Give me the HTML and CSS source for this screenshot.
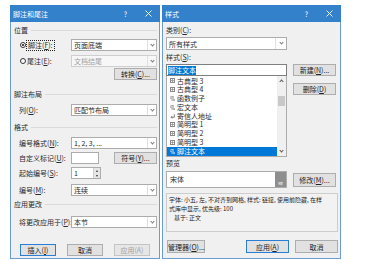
FILE: index.html
```html
<!DOCTYPE html>
<html>
<head>
<meta charset="utf-8">
<title>脚注和尾注 / 样式</title>
<link rel="stylesheet" href="styles.css">
</head>
<body>
<div class="desk">

  <!-- 脚注和尾注 -->
  <div class="dialog footnote">
    <div class="titlebar">
      <span class="title">脚注和尾注</span>
      <span class="tb-btn">?</span>
      <span class="tb-btn"><svg width="7" height="7" viewBox="0 0 7 7"><path d="M0.5 0.5L6.5 6.5M6.5 0.5L0.5 6.5" stroke="#fff" stroke-width="0.9"/></svg></span>
    </div>
    <div class="body">
      <div class="group mt3">位置</div>
      <div class="row mt4">
        <div class="lbl radio"><span class="dot on"></span><span class="focus">脚注(<u>F</u>):</span></div>
        <div class="combo"><span class="text">页面底端</span><i class="arrow"></i></div>
      </div>
      <div class="row mt4">
        <div class="lbl radio"><span class="dot"></span><span>尾注(<u>E</u>):</span></div>
        <div class="combo off"><span class="text">文档结尾</span><i class="arrow"></i></div>
      </div>
      <div class="row mt1">
        <button class="btn side-btn push">转换(<u>C</u>)...</button>
      </div>

      <div class="group mt9">脚注布局</div>
      <div class="row mt5">
        <div class="lbl">列(<u>O</u>):</div>
        <div class="combo"><span class="text">匹配节布局</span><i class="arrow"></i></div>
      </div>

      <div class="group mt6">格式</div>
      <div class="row mt5">
        <div class="lbl">编号格式(<u>N</u>):</div>
        <div class="combo"><span class="text">1, 2, 3, ...</span><i class="arrow"></i></div>
      </div>
      <div class="row mt3">
        <div class="lbl">自定义标记(<u>U</u>):</div>
        <div class="field"></div>
        <button class="btn side-btn push">符号(<u>Y</u>)...</button>
      </div>
      <div class="row mt3">
        <div class="lbl">起始编号(<u>S</u>):</div>
        <div class="spin"><span class="text">1</span><span class="spin-btns"><i class="up"></i><i class="down"></i></span></div>
      </div>
      <div class="row mt5">
        <div class="lbl">编号(<u>M</u>):</div>
        <div class="combo"><span class="text">连续</span><i class="arrow"></i></div>
      </div>

      <div class="group mt3">应用更改</div>
      <div class="row mt7">
        <div class="lbl">将更改应用于(<u>P</u>):</div>
        <div class="combo"><span class="text">本节</span><i class="arrow"></i></div>
      </div>

      <div class="actions fn-actions">
        <button class="btn fn-btn default">插入(<u>I</u>)</button>
        <button class="btn fn-btn">取消</button>
        <button class="btn fn-btn disabled">应用(A)</button>
      </div>
    </div>
  </div>

  <!-- 样式 -->
  <div class="dialog styles">
    <div class="titlebar">
      <span class="title">样式</span>
      <span class="tb-btn">?</span>
      <span class="tb-btn"><svg width="7" height="7" viewBox="0 0 7 7"><path d="M0.5 0.5L6.5 6.5M6.5 0.5L0.5 6.5" stroke="#fff" stroke-width="0.9"/></svg></span>
    </div>
    <div class="body">
      <div class="cap mt3">类别(<u>C</u>):</div>
      <div class="combo big mt2"><span class="text">所有样式</span><i class="arrow"></i></div>
      <div class="cap mt2">样式(<u>S</u>):</div>

      <div class="pick-row">
        <div class="picker">
          <div class="entry"><span class="sel">脚注文本</span></div>
          <div class="list">
            <ul class="items">
              <li><svg class="ico" width="5" height="5" viewBox="0 0 5 5"><rect x="0.5" y="0.5" width="4" height="4" fill="none" stroke="#8a8a8a"/><path d="M0 2.5H5M2.5 0V5" stroke="#8a8a8a" stroke-width="0.7"/></svg>古典型 3</li>
              <li><svg class="ico" width="5" height="5" viewBox="0 0 5 5"><rect x="0.5" y="0.5" width="4" height="4" fill="none" stroke="#8a8a8a"/><path d="M0 2.5H5M2.5 0V5" stroke="#8a8a8a" stroke-width="0.7"/></svg>古典型 4</li>
              <li><svg class="ico" width="5" height="5" viewBox="0 0 5 5"><path d="M2 0.5V5M3.2 0.5V5M3.6 0.5H1.3a1.1 1.1 0 0 0 0 2.3H2" fill="none" stroke="#8a8a8a" stroke-width="0.7"/><circle cx="4.3" cy="4" r="0.8" fill="#8a8a8a"/></svg>函数例子</li>
              <li><svg class="ico" width="5" height="5" viewBox="0 0 5 5"><path d="M2 0.5V5M3.2 0.5V5M3.6 0.5H1.3a1.1 1.1 0 0 0 0 2.3H2" fill="none" stroke="#8a8a8a" stroke-width="0.7"/><circle cx="4.3" cy="4" r="0.8" fill="#8a8a8a"/></svg>宏文本</li>
              <li><svg class="ico" width="5" height="5" viewBox="0 0 5 5"><path d="M4.3 0.3V3.3H1M2.3 2L1 3.3L2.3 4.6" fill="none" stroke="#555" stroke-width="0.7"/></svg>寄信人地址</li>
              <li><svg class="ico" width="5" height="5" viewBox="0 0 5 5"><rect x="0.5" y="0.5" width="4" height="4" fill="none" stroke="#8a8a8a"/><path d="M0 2.5H5M2.5 0V5" stroke="#8a8a8a" stroke-width="0.7"/></svg>简明型 1</li>
              <li><svg class="ico" width="5" height="5" viewBox="0 0 5 5"><rect x="0.5" y="0.5" width="4" height="4" fill="none" stroke="#8a8a8a"/><path d="M0 2.5H5M2.5 0V5" stroke="#8a8a8a" stroke-width="0.7"/></svg>简明型 2</li>
              <li><svg class="ico" width="5" height="5" viewBox="0 0 5 5"><rect x="0.5" y="0.5" width="4" height="4" fill="none" stroke="#8a8a8a"/><path d="M0 2.5H5M2.5 0V5" stroke="#8a8a8a" stroke-width="0.7"/></svg>简明型 3</li>
              <li class="cur"><svg class="ico" width="5" height="5" viewBox="0 0 5 5"><path d="M2 0.5V5M3.2 0.5V5M3.6 0.5H1.3a1.1 1.1 0 0 0 0 2.3H2" fill="none" stroke="#cfe3f7" stroke-width="0.7"/><circle cx="4.3" cy="4" r="0.8" fill="#cfe3f7"/></svg>脚注文本</li>
            </ul>
            <div class="vscroll">
              <i class="sb-up"></i>
              <span class="thumb"></span>
              <i class="sb-down"></i>
            </div>
          </div>
        </div>
        <div class="side">
          <button class="btn side-btn">新建(<u>N</u>)...</button>
          <button class="btn side-btn">删除(<u>D</u>)</button>
        </div>
      </div>

      <div class="cap mt1">预览</div>
      <div class="preview-row">
        <div class="preview"><span class="font">宋体</span><span class="pt">9磅</span></div>
        <button class="btn side-btn tall">修改(<u>M</u>)...</button>
      </div>

      <div class="desc">字体: 小五, 左, 不对齐到网格, 样式: 链接, 使用前隐藏, 在样<br>式库中显示, 优先级: 100<br><span class="indent">基于: 正文</span></div>

      <div class="actions st-actions">
        <button class="btn manager">管理器(<u>O</u>)...</button>
        <button class="btn side-btn default push">应用(<u>A</u>)</button>
        <button class="btn side-btn">取消</button>
      </div>
    </div>
  </div>

</div>
</body>
</html>
```

FILE: styles.css
```css
body {
  margin: 0;
  background: #fff;
  font-family: "Noto Sans CJK SC", sans-serif;
  font-size: 7px;
  line-height: 10px;
  color: #2a2a2a;
}

u {
  text-underline-offset: 1px;
}

.desk {
  display: flex;
  gap: 2px;
  padding: 5px 0 0 10px;
}

/* dialog frame */
.dialog {
  box-sizing: border-box;
  height: 254px;
  background: #f0f0f0;
  border: 1px solid #6a9dd3;
  border-top: none;
  display: flex;
  flex-direction: column;
}
.footnote { width: 150px; }
.styles { width: 179px; }

.titlebar {
  flex-shrink: 0;
  height: 17px;
  margin: 0 -1px;
  padding-left: 3px;
  background: #3380cb;
  color: #fff;
  display: flex;
  align-items: center;
}
.titlebar .title { flex: 1; }
.tb-btn {
  width: 23px;
  display: flex;
  justify-content: center;
  align-items: center;
}

.body {
  padding: 0 2px 0 3px;
  display: flex;
  flex-direction: column;
}

/* spacing helpers */
.mt1 { margin-top: 1px; }
.mt2 { margin-top: 2px; }
.mt3 { margin-top: 3px; }
.mt4 { margin-top: 4px; }
.mt5 { margin-top: 5px; }
.mt6 { margin-top: 6px; }
.mt7 { margin-top: 7px; }
.mt9 { margin-top: 9px; }

/* group captions with a rule */
.group {
  height: 10px;
  display: flex;
  align-items: center;
  gap: 3px;
}
.group::after {
  content: "";
  flex: 1;
  height: 1px;
  background: #dadada;
}
.cap { height: 10px; }

.row {
  height: 12px;
  display: flex;
  align-items: center;
}
.lbl {
  flex-shrink: 0;
  width: 52px;
  padding-left: 5px;
  white-space: nowrap;
}
.radio {
  display: flex;
  align-items: center;
  gap: 1px;
  padding-left: 6px;
  width: 51px;
}
.dot {
  box-sizing: border-box;
  width: 6px;
  height: 6px;
  border: 1px solid #333;
  border-radius: 50%;
  background: #fff;
  position: relative;
}
.dot.on::after {
  content: "";
  position: absolute;
  left: 1px;
  top: 1px;
  width: 2px;
  height: 2px;
  border-radius: 50%;
  background: #111;
}
.focus {
  outline: 1px dotted #222;
  outline-offset: 0;
  padding: 0 1px;
  line-height: 9px;
}

/* combo boxes */
.combo {
  box-sizing: border-box;
  flex: 1;
  height: 12px;
  border: 1px solid #acacac;
  background: #fff;
  display: flex;
  align-items: center;
  padding-left: 2px;
}
.combo .text { flex: 1; white-space: nowrap; }
.combo.off { background: #f7f7f7; color: #a0a0a0; border-color: #cfcfcf; }
.combo.big { flex: none; width: 121px; height: 13px; }
.arrow {
  box-sizing: border-box;
  width: 9px;
  height: 100%;
  border-left: 1px solid #e0e0e0;
  display: flex;
  justify-content: center;
  align-items: center;
}
.arrow::before {
  content: "";
  width: 2px;
  height: 2px;
  margin-top: -2px;
  border-right: 1px solid #777;
  border-bottom: 1px solid #777;
  transform: rotate(45deg);
}
.big .arrow { width: 11px; }

.field {
  box-sizing: border-box;
  width: 28px;
  height: 12px;
  border: 1px solid #acacac;
  background: #fff;
}

.spin {
  box-sizing: border-box;
  width: 30px;
  height: 12px;
  border: 1px solid #acacac;
  background: #fff;
  display: flex;
  padding-left: 2px;
}
.spin .text { flex: 1; line-height: 10px; }
.spin-btns {
  width: 6px;
  display: flex;
  flex-direction: column;
  background: #e6e6e6;
  border-left: 1px solid #d0d0d0;
}
.spin-btns i {
  flex: 1;
  display: flex;
  justify-content: center;
  align-items: center;
}
.spin-btns i::before {
  content: "";
  border-left: 1.5px solid transparent;
  border-right: 1.5px solid transparent;
}
.spin-btns .up::before { border-bottom: 2px solid #333; }
.spin-btns .down::before { border-top: 2px solid #333; }

/* buttons */
.btn {
  box-sizing: border-box;
  height: 12px;
  padding: 0;
  font: inherit;
  line-height: 10px;
  color: #222;
  background: #e1e1e1;
  border: 1px solid #adadad;
  white-space: nowrap;
}
.btn.default { border-color: #2a7fd4; }
.btn.disabled { color: #a3a3a3; border-color: #c4c4c4; background: #e6e6e6; }
.side-btn { width: 43px; }
.push { margin-left: auto; }
.tall { height: 14px; }

.actions { display: flex; }
.fn-actions {
  margin-top: 16px;
  padding-left: 6px;
  gap: 11px;
}
.fn-btn { width: 36px; }

/* style list */
.pick-row {
  display: flex;
  gap: 6px;
  margin-top: 2px;
}
.picker { width: 121px; }
.entry {
  box-sizing: border-box;
  height: 12px;
  border: 1px solid #7f7f7f;
  background: #fff;
  padding-left: 1px;
  display: flex;
  align-items: center;
}
.entry .sel {
  background: #0078d7;
  color: #fff;
  line-height: 9px;
}
.list {
  box-sizing: border-box;
  height: 81px;
  border: 1px solid #acacac;
  border-top: none;
  background: #fff;
  display: flex;
}
.items {
  flex: 1;
  margin: 0;
  padding: 0.5px 0 0;
  list-style: none;
}
.items li {
  height: 8.8px;
  line-height: 8.8px;
  padding-left: 3px;
  display: flex;
  align-items: center;
  gap: 2px;
  white-space: nowrap;
}
.items li.cur { background: #0078d7; color: #fff; }
.vscroll {
  width: 9px;
  background: #f0f0f0;
  display: flex;
  flex-direction: column;
  align-items: center;
}
.sb-up, .sb-down {
  height: 9px;
  display: flex;
  align-items: center;
  justify-content: center;
}
.sb-up::before, .sb-down::before {
  content: "";
  width: 2px;
  height: 2px;
  border-left: 1px solid #555;
  border-top: 1px solid #555;
}
.sb-up::before { transform: rotate(45deg); margin-top: 2px; }
.sb-down::before { transform: rotate(225deg); margin-top: -2px; }
.thumb {
  width: 7px;
  height: 10px;
  margin-top: 11px;
  background: #c8c8c8;
}
.sb-down { margin-top: auto; }

.side {
  display: flex;
  flex-direction: column;
  gap: 7px;
}

/* preview */
.preview-row {
  height: 17px;
  margin-top: 3px;
  display: flex;
  align-items: center;
  gap: 6px;
}
.preview {
  box-sizing: border-box;
  width: 121px;
  height: 17px;
  border: 1px solid #acacac;
  background: #fff;
  display: flex;
}
.preview .font { flex: 1; padding-left: 3px; line-height: 15px; }
.preview .pt {
  width: 11px;
  background: #8e8e8e;
  color: #fff;
  font-size: 3px;
  line-height: 5px;
  display: flex;
  align-items: flex-end;
  justify-content: center;
}

.desc {
  box-sizing: border-box;
  height: 39px;
  margin-top: 5px;
  padding: 1px 2px;
  border: 1px solid #cdcdcd;
  background: #f2f2f2;
  font-size: 6px;
  line-height: 9px;
  color: #222;
  white-space: nowrap;
}
.desc .indent { padding-left: 5px; }

.st-actions {
  margin-top: 8px;
  gap: 6px;
}
.st-actions .btn { height: 13px; }
.manager { width: 38px; margin-left: 1px; }
```
